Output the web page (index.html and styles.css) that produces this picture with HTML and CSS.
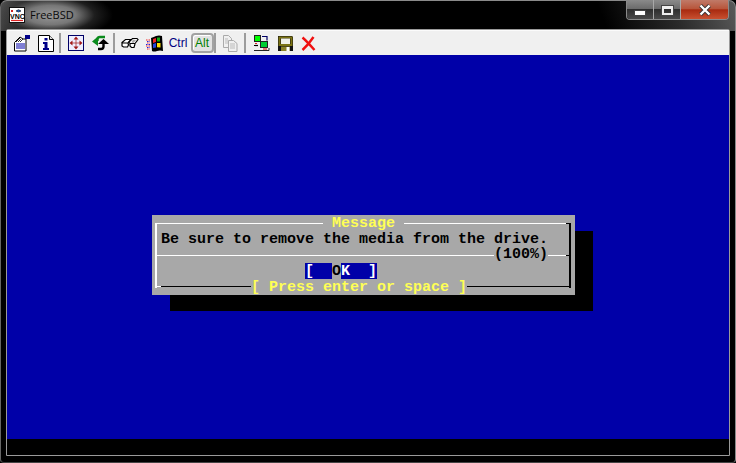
FILE: index.html
```html
<!DOCTYPE html>
<html lang="en">
<head>
<meta charset="utf-8">
<title>FreeBSD</title>
<link rel="stylesheet" href="styles.css">
</head>
<body>
<div class="window">
  <header class="titlebar">
    <svg class="app-icon" width="16" height="16" viewBox="0 0 16 16">
      <rect x="0.5" y="0.5" width="15" height="15" fill="#fff" stroke="#111"/>
      <path d="M2 3l2 2M4 3l-2 2" stroke="#c22" stroke-width="1"/>
      <path d="M7 4q2.500-2.500 5 0q-2.500 2-5 0z" fill="#26c" stroke="#111" stroke-width=".6"/>
      <text x="1" y="11.500" class="app-icon-text">VNC</text>
      <path d="M2 13.500h12" stroke="#d22" stroke-width="1.200"/>
    </svg>
    <span class="title">FreeBSD</span>
    <div class="caption">
      <div class="cap cap-min"><span class="min-glyph"></span></div>
      <div class="cap cap-max"><span class="max-glyph"></span></div>
      <div class="cap cap-close"><svg width="14" height="12" viewBox="0 0 14 12"><path d="M2.500 1.500l9 9M11.500 1.500l-9 9" stroke="#333" stroke-width="4"/><path d="M2.500 1.500l9 9M11.500 1.500l-9 9" stroke="#fff" stroke-width="2.400"/></svg></div>
    </div>
  </header>
  <div class="client">
    <nav class="toolbar">
      <div class="group">
        <div class="tool"><svg width="18" height="17" viewBox="0 0 18 17"><path d="M1.500 7.500L7 2l3 2h3v12H1.500z" fill="#fff" stroke="#000"/><path d="M3 7l4-4M5 7l3-3M7 7l3-3" stroke="#000" stroke-width=".8"/><rect x="12" y="0" width="5" height="4" fill="#008"/><path d="M3 9h9M3 11h9M3 13h9" stroke="#00a" stroke-width="1.100"/></svg></div>
        <div class="tool"><svg width="16" height="17" viewBox="0 0 16 17"><path d="M.5.500h11l4 4v12H.500z" fill="#fff" stroke="#000"/><path d="M11.500.500v4h4" fill="#ddd" stroke="#000"/><rect x="6.500" y="3" width="3" height="2.500" fill="#008"/><path d="M5 7h4.500v6h1.500v2H5v-2h1.500V9H5z" fill="#008"/></svg></div>
      </div>
      <div class="sep"></div>
      <div class="group">
        <div class="tool"><svg width="16" height="16" viewBox="0 0 16 16"><rect x=".5" y=".5" width="15" height="15" fill="#eef" stroke="#006"/><path d="M8 1.500l2.500 3h-5zM8 14.500l2.500-3h-5zM1.500 8l3-2.500v5zM14.500 8l-3-2.500v5z" fill="#a01818"/><rect x="7" y="4" width="2" height="8" fill="#a01818" opacity=".35"/><rect x="4" y="7" width="8" height="2" fill="#a01818" opacity=".35"/></svg></div>
        <div class="tool"><svg width="17" height="16" viewBox="0 0 17 16"><path d="M13 2H8Q5.500 2 5.500 4.500V6" fill="none" stroke="#0a8a1c" stroke-width="2.400"/><path d="M0 6.500L6 1.500V11z" fill="#0a8a1c"/><path d="M6 14h3q2.500 0 2.500-2.500V9" fill="none" stroke="#000" stroke-width="2.400"/><path d="M11.500 4L17 9H6z" fill="#000"/></svg></div>
      </div>
      <div class="sep"></div>
      <div class="group">
        <div class="tool"><svg width="18" height="12" viewBox="0 0 18 12"><path d="M1 5.500L4.500 2.500H10L7 6H1.500zM1 5.500V9l1.500 1h4L7.500 8 7 6" fill="#fff" stroke="#000" stroke-width="1.200"/><path d="M8 5L11.500 1.500H16L17 2.500 14 6.500H9zM9 6.500V9l1.500 1.500h2.500L14 7" fill="#fff" stroke="#000" stroke-width="1.200"/><path d="M12 2.500l3 .5-2.500 3-2-.5z" fill="#aaa"/></svg></div>
        <div class="tool"><svg width="17" height="17" viewBox="0 0 17 17"><path d="M5 3q3-1 5-2 3-1 6 0l1 15q-3-1-6 0-3 1-5 0z" fill="#000"/><path d="M11 2.500h3v4h-3z" fill="#1a1"/><path d="M7 4l3-1v4l-3 1z" fill="#e22"/><path d="M7 9l3-1v4.500l-3 .5z" fill="#24d"/><path d="M11 8h3.500v4.500l-3.500-.2z" fill="#fd0"/><path d="M0 5h4M1 8h3M0 11h4M1 14h3" stroke="#e22" stroke-width="1.200" stroke-dasharray="1.500 1"/><path d="M1 6.500h3M0 9.500h4M1 12.500h3" stroke="#22d" stroke-width="1" stroke-dasharray="1.500 1"/></svg></div>
        <div class="tool key key-ctrl">Ctrl</div>
        <div class="tool"><div class="key key-alt">Alt</div></div>
      </div>
      <div class="sep sep-tight"></div>
      <div class="group">
        <div class="tool"><svg width="16" height="17" viewBox="0 0 16 17"><path d="M1.500.500h5l3 3v9h-8z" fill="#f0f0f0" stroke="#aaa"/><path d="M6.500 5.500h5l3.500 3v8H6.500z" fill="#f0f0f0" stroke="#aaa"/><path d="M3 4h3M3 6h3M3 8h3M8 9h5M8 11h5M8 13h5" stroke="#bbb"/></svg></div>
      </div>
      <div class="sep sep-wide"></div>
      <div class="group group-end">
        <div class="tool tool-narrow"><svg width="16" height="17" viewBox="0 0 16 17"><rect x=".5" y=".5" width="6" height="6" fill="#0f0" stroke="#222"/><path d="M8 1.500h5v4" fill="none" stroke="#006" stroke-width="1.200"/><rect x="6.500" y="6.500" width="7" height="6" fill="#0c3" stroke="#222"/><path d="M0 10.500h4" stroke="#000" stroke-width="1.200"/><path d="M0 15.500h15V13" fill="none" stroke="#222" stroke-width="1"/><path d="M9 14h4" stroke="#d22" stroke-width="1.200"/><path d="M1 8.500h2" stroke="#d22"/></svg></div>
        <div class="tool tool-narrow"><svg width="15" height="15" viewBox="0 0 15 15"><path d="M0 0h14l1 1v14H0z" fill="#111"/><path d="M1.500 1.500h12V9h-12z" fill="none" stroke="#7b7314" stroke-width="2"/><rect x="3" y="2.500" width="9" height="5.500" fill="#f0f0e8"/><rect x="3" y="10.500" width="9" height="4.500" fill="#8a8228"/><rect x="8.500" y="11" width="3" height="4" fill="#fff"/></svg></div>
        <div class="tool tool-narrow"><svg width="15" height="15" viewBox="0 0 15 15"><path d="M1.500 1.500c4 3.500 8 8 12 12.500" fill="none" stroke="#f01010" stroke-width="2.400"/><path d="M12.500 1c-3 4.500-6 8.500-11 13" fill="none" stroke="#f01010" stroke-width="2.400"/></svg></div>
      </div>
    </nav>
    <main class="screen">
      <div class="console">
        <section class="dialog">
          <div class="box">
            <div class="rule-row rule-top">
              <span class="line line-white line-title"></span>
              <span class="cell yellow"> Message </span>
              <span class="line line-white grow"></span>
              <span class="line line-black tick"></span>
            </div>
            <div class="text-row first-text">Be sure to remove the media from the drive.</div>
            <div class="text-row rule-row">
              <span class="line line-white grow"></span>
              <span class="cell">(100%)</span>
              <span class="line line-white after-pct"></span>
              <span class="line line-black tick"></span>
            </div>
            <div class="text-row button-row">
              <span class="btn">[  </span><span class="cursor">O</span><span class="btn">K  ]</span>
            </div>
            <div class="rule-row rule-bottom">
              <span class="line line-white stub"></span>
              <span class="line line-black lead"></span>
              <span class="cell yellow cell-low">[ Press enter or space ]</span>
              <span class="line line-black grow"></span>
            </div>
          </div>
        </section>
      </div>
    </main>
  </div>
</div>
</body>
</html>
```
FILE: styles.css
```css
* { box-sizing: border-box; }
html, body { margin: 0; padding: 0; background: #000; }
body { width: 736px; height: 463px; overflow: hidden; }

.window {
  width: 736px;
  height: 463px;
  display: flex;
  flex-direction: column;
  border-radius: 7px 7px 4px 4px;
  border: 1px solid #8a8a8a;
  border-bottom-color: #444;
  border-left-color: #666;
  background:
    radial-gradient(ellipse 62px 24px at 50px 14px, #9a9a9a 0%, #777 40%, rgba(60,60,60,.5) 70%, rgba(0,0,0,0) 100%),
    linear-gradient(250deg, #5a5a5a 0, #2a2a2a 60px, rgba(0,0,0,0) 130px),
    linear-gradient(110deg, #555 0, #222 24px, rgba(0,0,0,0) 60px),
    #000;
  background-repeat: no-repeat;
  background-size: 100% 30px;
}

.titlebar {
  height: 28px;
  flex: none;
  display: flex;
  align-items: flex-start;
  padding-left: 8px;
}
.app-icon { margin-top: 6px; flex: none; }
.app-icon-text { font: bold 7px "Liberation Sans", sans-serif; fill: #000; }
.title {
  margin: 6px 0 0 5px;
  font: 11px/16px "Open Sans", sans-serif;
  color: #0a0a0a;
}
.caption {
  margin-left: auto;
  margin-right: 6px;
  display: flex;
  height: 20px;
  margin-top: -1px;
  border: 1px solid #8a8a8a;
  border-top: 0;
  border-radius: 0 0 4px 4px;
  overflow: hidden;
}
.cap {
  display: flex;
  align-items: center;
  justify-content: center;
  padding-top: 1px;
}
.cap-min {
  width: 27px;
  background: linear-gradient(#8a8a8a, #6c6c6c 45%, #2e2e2e 50%, #4a4a4a);
  border-right: 1px solid #a8a8a8;
}
.cap-max {
  width: 27px;
  background: linear-gradient(#8a8a8a, #6c6c6c 45%, #2e2e2e 50%, #4a4a4a);
  border-right: 1px solid #a8a8a8;
}
.cap-close {
  width: 47px;
  background: linear-gradient(#c07a68, #b8563c 45%, #a82a10 52%, #c85030);
}
.min-glyph {
  width: 10px;
  height: 4px;
  margin-top: 6px;
  background: #fff;
  box-shadow: 0 0 0 1px #444;
}
.max-glyph {
  width: 11px;
  height: 9px;
  border: 2px solid #eee;
  border-top-width: 3px;
  box-shadow: 0 0 0 1px #444;
}

.client {
  flex: 1;
  margin: 0 5px 6px;
  border: 1px solid #9a9a9a;
  border-radius: 2px 2px 0 0;
  background: #000;
  display: flex;
  flex-direction: column;
  min-height: 0;
}

.toolbar {
  height: 25px;
  flex: none;
  display: flex;
  align-items: center;
  padding-left: 3px;
  background: #f0f0f0;
  border-top: 1px solid #fbfbfb;
}
.group { display: flex; align-items: center; }
.group-end { padding-left: 1px; }
.tool {
  width: 24px;
  height: 24px;
  display: flex;
  align-items: center;
  justify-content: center;
  flex: none;
}
.tool-narrow { width: 23.5px; }
.sep {
  width: 2px;
  height: 20px;
  background: #9c9c9c;
  margin: 0 3px 0 1px;
  flex: none;
}
.sep-tight { margin: 0 2px 0 0; }
.sep-wide { margin: 0 3px 0 2px; }
.key {
  font: 12px/14px "Liberation Sans", sans-serif;
}
.key-ctrl { color: #000080; }
.key-alt {
  width: 23px;
  height: 20px;
  display: flex;
  align-items: center;
  justify-content: center;
  color: #008000;
  background: #e2e2e2;
  border: 2px solid #a2a2a2;
  border-radius: 4px;
  box-shadow: inset 1px 1px 0 #fff;
}

.screen {
  flex: none;
  height: 384px;
  background: #0000a8;
}
.console { padding: 160px 0 0 145px; }

.dialog {
  width: 423px;
  height: 80px;
  padding: 8px 4px 0 3px;
  background: #a8a8a8;
  box-shadow: 18px 16px 0 #000;
  font: bold 15px/16px "Liberation Mono", monospace;
  color: #000;
}
.box {
  width: 416px;
  height: 65px;
  border-left: 2px solid #fff;
  border-right: 2px solid #000;
  display: flex;
  flex-direction: column;
}
.rule-row { display: flex; align-items: center; }
.rule-top, .rule-bottom { height: 1px; flex: none; }
.text-row { height: 16px; flex: none; }
.first-text { margin-top: 7px; padding: 2px 0 0 4px; white-space: pre; line-height: 14px; }
.button-row { display: flex; padding-left: 148px; }
.btn, .cursor { display: block; height: 16px; padding-top: 2px; line-height: 14px; white-space: pre; }
.btn { color: #fff; background: #0000a8; }
.cursor { color: #000; background: #a8a8a8; }
.cell { flex: none; white-space: pre; }
.cell-low { padding-top: 2px; line-height: 14px; }
.yellow { color: #ffff54; }
.line { display: block; height: 1px; flex: none; }
.grow { flex: 1; }
.line-white { background: #fff; }
.line-black { background: #000; }
.line-title { width: 166px; }
.tick { width: 3px; }
.after-pct { width: 18px; }
.stub { width: 4px; }
.lead { width: 90px; }
.rule-bottom { margin-top: 7px; }
```
